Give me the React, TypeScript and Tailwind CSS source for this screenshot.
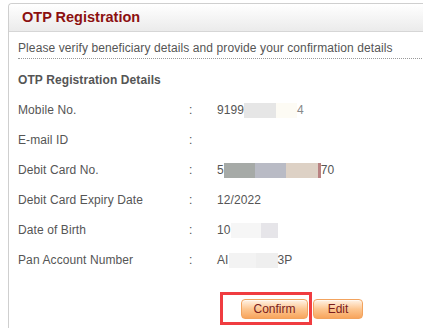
import React from "react";

interface Field {
  label: string;
  value: React.ReactNode;
}

const Mask = ({ w, color }: { w: number; color: string }) => (
  <span className="inline-block h-[15px] align-middle" style={{ width: w, background: color }} />
);

const fields: Field[] = [
  {
    label: "Mobile No.",
    value: (
      <span className="flex items-center">
        9199
        <Mask w={32} color="#e6e6e6" />
        <Mask w={21} color="#fdfbf4" />
        <span className="text-[#888]">4</span>
      </span>
    ),
  },
  { label: "E-mail ID", value: null },
  {
    label: "Debit Card No.",
    value: (
      <span className="flex items-center">
        5
        <Mask w={31} color="#a6aaa7" />
        <Mask w={31} color="#b9bbc5" />
        <Mask w={32} color="#ddd1c5" />
        <Mask w={3} color="#b98282" />
        70
      </span>
    ),
  },
  { label: "Debit Card Expiry Date", value: "12/2022" },
  {
    label: "Date of Birth",
    value: (
      <span className="flex items-center">
        10
        <Mask w={30} color="#f6f6f6" />
        <Mask w={17} color="#e6e5e9" />
      </span>
    ),
  },
  {
    label: "Pan Account Number",
    value: (
      <span className="flex items-center">
        AI
        <Mask w={27} color="#f3f3f3" />
        <Mask w={22} color="#efefef" />
        3P
      </span>
    ),
  },
];

const btn =
  "h-[20px] rounded-[4px] border border-[#f2a35e] bg-gradient-to-b from-[#fff3e6] via-[#fcc690] to-[#f8a55c] text-[12px] leading-[18px] text-[#7b1c1c] shadow-[inset_0_1px_0_#fff8f0]";

export default function App() {
  return (
    <div
      className="h-[328px] w-[423px] overflow-hidden bg-white pl-[8px] pt-[3px]"
      style={{ fontFamily: '"Liberation Sans", Arial, sans-serif' }}
    >
      <div className="w-[430px] rounded-tl-[4px] border-l border-t border-[#cfcfcf] pb-[20px]">
        {/* Header */}
        <div className="flex h-[28px] items-center rounded-tl-[4px] border-b border-[#d6d6d6] bg-gradient-to-b from-white to-[#ebebeb] pl-[13px]">
          <span className="text-[14.5px] font-bold text-[#8c1010]">OTP Registration</span>
        </div>

        <div className="pl-[9px] text-[12px] tracking-[0.1px] text-[#555]">
          <p className="border-b border-dotted border-[#999] pb-[3px] pt-[9px] leading-[14px]">
            Please verify beneficiary details and provide your confirmation details
          </p>

          <h3 className="mt-[6px] flex h-[30px] items-center font-bold text-[#555]">
            OTP Registration Details
          </h3>

          {fields.map((f) => (
            <div key={f.label} className="flex h-[30px] items-center">
              <span className="w-[171px]">{f.label}</span>
              <span className="w-[28px]">:</span>
              {f.value}
            </div>
          ))}

          {/* Actions */}
          <div className="ml-[202px] mt-[17px] flex items-start tracking-normal">
            <div className="flex h-[33px] w-[92px] border-[3px] border-[#f03c40] pl-[18px] pt-[4px]">
              <button className={`${btn} w-[67px]`}>Confirm</button>
            </div>
            <button className={`${btn} ml-[1px] mt-[7px] w-[50px]`}>Edit</button>
          </div>
        </div>
      </div>
    </div>
  );
}
